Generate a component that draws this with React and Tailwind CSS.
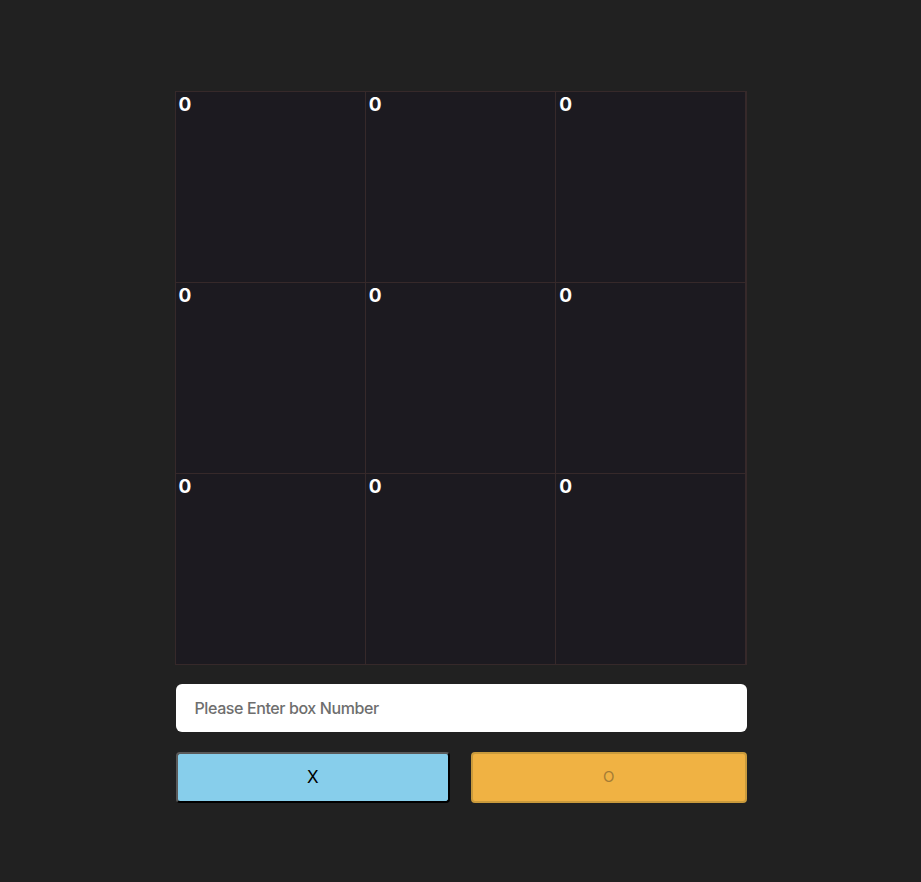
import React, { useState } from "react";

export default function App() {
  const [boxes] = useState(Array(9).fill(0));
  const [value, setValue] = useState("");

  return (
    <div className="min-h-[882px] bg-[#212121] pt-[91px]" style={{ fontFamily: "Inter, 'Noto Sans', sans-serif" }}>
      <div className="mx-auto w-[572px]">
        <div className="grid grid-cols-3 gap-px bg-[#36292a] p-px">
          {boxes.map((box, index) => (
            <div key={index} className="h-[190px] bg-[#1c1a20] px-[3px] pt-[1px]">
              <span className="text-[19px] font-bold leading-6 text-white">{box}</span>
            </div>
          ))}
        </div>

        <input
          value={value}
          onChange={(event) => setValue(event.target.value)}
          placeholder="Please Enter box Number"
          className="mt-[19px] ml-px block h-[48px] w-[571px] rounded-md bg-white px-[19px] text-[16px] font-medium tracking-[-0.4px] text-black placeholder:text-[#6e6e6e] outline-none"
        />

        <div className="mt-[20px] ml-px flex gap-[21px]">
          <button className="h-[51px] w-[275px] rounded-[4px] border-2 border-t-[#5a5a5a] border-l-[#5a5a5a] border-r-black border-b-black bg-[#87ceeb] text-[17px] text-black">
            X
          </button>
          <button className="h-[51px] w-[276px] rounded-[4px] border-2 border-[#c99a3c] bg-[#f0b243] text-[15px] text-[#a47c35]">
            O
          </button>
        </div>
      </div>
    </div>
  );
}
